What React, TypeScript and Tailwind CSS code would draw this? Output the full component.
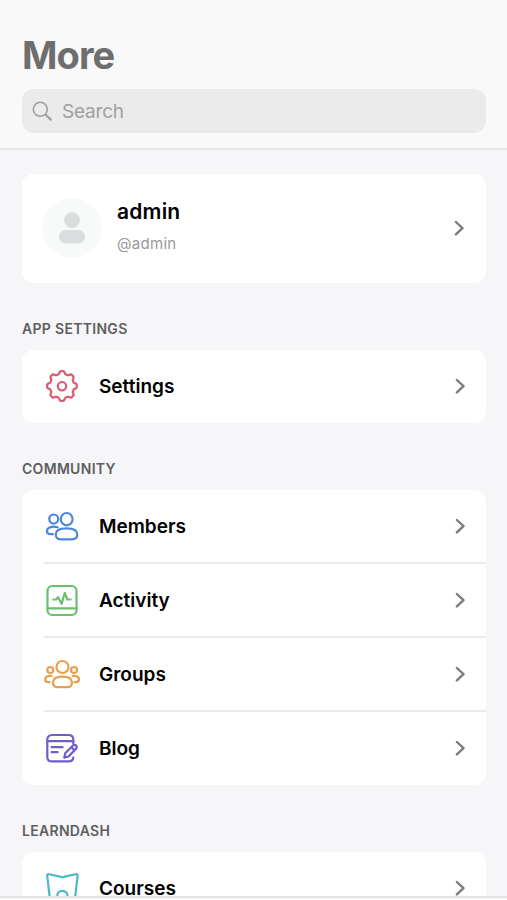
import type { ReactNode } from 'react';

interface MenuItem {
  label: string;
  icon: ReactNode;
}

interface MenuSection {
  title: string;
  items: MenuItem[];
}

function Icon({ color, children }: { color: string; children: ReactNode }) {
  return (
    <svg
      className={`size-9 shrink-0 ${color}`}
      viewBox="0 0 36 36"
      fill="none"
      stroke="currentColor"
      strokeWidth="2.2"
      strokeLinecap="round"
      strokeLinejoin="round"
    >
      {children}
    </svg>
  );
}

// eight flat-topped teeth around the centre
const gearPath =
  Array.from({ length: 160 }, (_, i) => {
    const a = (i / 160) * Math.PI * 2;
    const r = 13.5 + 1.4 * Math.tanh(2.2 * Math.cos(8 * a));
    return `${i ? 'L' : 'M'}${(18 + r * Math.cos(a)).toFixed(2)} ${(18 + r * Math.sin(a)).toFixed(2)}`;
  }).join('') + 'Z';

function SettingsIcon() {
  return (
    <Icon color="text-[#dc5a70]">
      <path d={gearPath} />
      <circle cx="18" cy="18.2" r="4.2" />
    </Icon>
  );
}

function MembersIcon() {
  return (
    <Icon color="text-[#4c86de]">
      <circle cx="9.7" cy="11" r="4.5" />
      <ellipse cx="22.7" cy="11.2" rx="5.9" ry="6.2" />
      <path d="M22.5 20.4c6.6 0 10.8 2 10.8 6.2 0 3.6-2.4 4.8-5.6 4.8H17.3c-3.2 0-5.6-1.2-5.6-4.8 0-4.2 4.2-6.2 10.8-6.2Z" />
      <path d="M13.6 19.2C8 17.9 3 19.3 3 22.9c0 2.3 1.5 3.2 3.8 3.2h2.1" />
    </Icon>
  );
}

function ActivityIcon() {
  return (
    <Icon color="text-[#6abf6e]">
      <rect x="3.5" y="4" width="29" height="29" rx="4.8" />
      <path d="M3.5 26.3h29" />
      <path d="M9.3 17.5h2.9l1.9-2.3 3.5 6.6 3.2-11 2.5 6.7h3.3" />
    </Icon>
  );
}

function GroupsIcon() {
  return (
    <Icon color="text-[#e6a04e]">
      <circle cx="18.5" cy="11" r="6" />
      <circle cx="6.3" cy="14" r="3" />
      <circle cx="30" cy="14" r="3" />
      <path d="M18.5 20.7c5.7 0 9.5 1.8 9.5 5.8 0 3.4-2 4.7-4.7 4.7h-9.6c-2.7 0-4.7-1.3-4.7-4.7 0-4 3.8-5.8 9.5-5.8Z" />
      <path d="M7.5 19.9c-3.6-.4-6.3.8-6.3 3.4 0 1.9 1.2 2.8 3.2 2.8h1.3" />
      <path d="M28.7 19.9c3.6-.4 6.3.8 6.3 3.4 0 1.9-1.2 2.8-3.2 2.8h-1.3" />
    </Icon>
  );
}

function BlogIcon() {
  return (
    <Icon color="text-[#6c5fc7]">
      <path d="M29.3 13.2V9.5c0-2.7-1.9-4.500-4.600-4.500H7.900C5.200 5 3.300 6.800 3.300 9.500v17.400c0 2.700 1.900 4.500 4.600 4.500h17c2.400 0 4.200-1.500 4.400-3.700" />
      <path d="M3.300 11.200h26M7.600 17.200h11M7.600 22.200h6" />
      <path d="m20.300 27.700.9-4.400 7.500-7.600c1.100-1.100 2.500-1.100 3.400-.2s.9 2.300-.2 3.400l-7.400 7.600-4.200 1.200ZM27.500 17.200l3 3" />
    </Icon>
  );
}

function CoursesIcon() {
  return (
    <Icon color="text-[#4bb9c6]">
      <path d="M11.500 31.500c-3.500 0-5.300-1.500-5.800-4.500L3.200 5.800c-.2-1.400.7-2 2-1.600l9.800 2.200c2 .5 2.800 1 3.400 1s1.400-.5 3.400-1l9.800-2.200c1.300-.4 2.200.2 2 1.600L31.200 27c-.5 3-2.300 4.500-5.800 4.500" />
      <path d="M13.200 29v-3c0-6.800 10.400-6.800 10.400 0v3" />
    </Icon>
  );
}

function Chevron() {
  return (
    <svg
      className="ml-auto h-4 w-2.5 shrink-0 text-[#7c7c7e]"
      viewBox="0 0 10 16"
      fill="none"
      stroke="currentColor"
      strokeWidth="2.4"
      strokeLinecap="round"
      strokeLinejoin="round"
    >
      <path d="M1.9 2 8.500 8.200 1.900 14.400" />
    </svg>
  );
}

const sections: MenuSection[] = [
  { title: 'APP SETTINGS', items: [{ label: 'Settings', icon: <SettingsIcon /> }] },
  {
    title: 'COMMUNITY',
    items: [
      { label: 'Members', icon: <MembersIcon /> },
      { label: 'Activity', icon: <ActivityIcon /> },
      { label: 'Groups', icon: <GroupsIcon /> },
      { label: 'Blog', icon: <BlogIcon /> },
    ],
  },
  { title: 'LEARNDASH', items: [{ label: 'Courses', icon: <CoursesIcon /> }] },
];

function Section({ title, items }: MenuSection) {
  return (
    <section>
      <h2 className="flex h-[67px] items-end pb-[11px] text-[14px] leading-5 font-semibold tracking-[0.3px] text-[#5e5e61]">
        {title}
      </h2>
      <ul className="rounded-xl bg-white pb-px">
        {items.map((item, i) => (
          <li key={item.label} className="pl-[22px]">
            <div
              className={`flex h-[72px] items-center pr-[21px] ${i > 0 ? 'box-content border-t-2 border-[#ebebed]' : ''}`}
            >
              {item.icon}
              <span className="ml-[19px] pt-px text-[19px] leading-3 font-semibold text-black">{item.label}</span>
              <Chevron />
            </div>
          </li>
        ))}
      </ul>
    </section>
  );
}

export default function App() {
  return (
    <div className="flex h-[900px] w-[507px] flex-col overflow-hidden bg-[#f6f6f8] font-['Inter',sans-serif]">
      <header className="h-[150px] shrink-0 border-b-2 border-[#e6e6e8] bg-[#f9f9f9] px-[22px] pt-[31px]">
        <h1 className="text-[38px] leading-[48px] font-bold tracking-[-0.9px] text-[#6e6e6e]">More</h1>
        <div className="mt-2.5 flex h-11 w-[464px] items-center rounded-xl bg-[#ebebeb] pl-2.5 text-[#a0a0a0]">
          <svg className="size-5" viewBox="0 0 20 20" fill="none" stroke="currentColor" strokeLinecap="round">
            <circle cx="8.3" cy="8.3" r="7" strokeWidth="1.6" />
            <path d="m13.6 13.6 5.2 5" strokeWidth="2.2" />
          </svg>
          <span className="ml-2.5 pt-0.5 text-[19px] tracking-[-0.2px]">Search</span>
        </div>
      </header>

      <main className="min-h-0 flex-1 overflow-hidden px-[22px] pt-6">
        <div className="flex h-[109px] w-[464px] items-center rounded-xl bg-white pr-[22px] pb-px pl-5">
          <div className="flex size-[60px] items-center justify-center rounded-full bg-[#f8f9f9]">
            <svg className="h-8 w-[26px] text-[#dadddd]" viewBox="0 0 26 32" fill="currentColor">
              <circle cx="13" cy="8.2" r="7.9" />
              <rect y="18" width="26" height="13.5" rx="6.7" />
            </svg>
          </div>
          <div className="ml-[15px] pb-[5px]">
            <p className="text-[21px] leading-7 font-semibold tracking-[0.2px] text-black">admin</p>
            <p className="mt-2 text-[15px] leading-5 tracking-[0.3px] text-[#98989b]">@admin</p>
          </div>
          <Chevron />
        </div>
        <div className="w-[464px]">
          {sections.map((section) => (
            <Section key={section.title} {...section} />
          ))}
        </div>
      </main>

      <footer className="h-1 shrink-0 border-t-2 border-[#e3e3e6] bg-[#f8f8f8]" />
    </div>
  );
}
